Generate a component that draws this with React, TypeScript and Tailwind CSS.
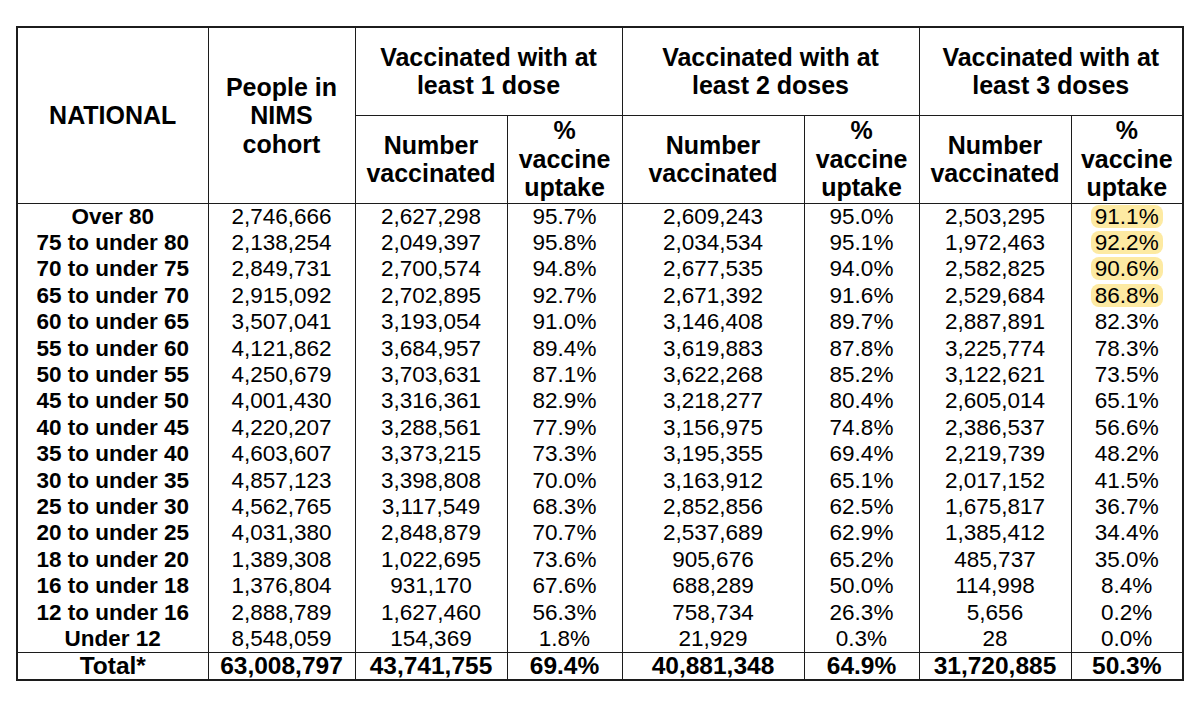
import React from 'react';

type Row = [string, string, string, string, string, string, string, string];

const ROWS: Row[] = [
  ['Over 80', '2,746,666', '2,627,298', '95.7%', '2,609,243', '95.0%', '2,503,295', '91.1%'],
  ['75 to under 80', '2,138,254', '2,049,397', '95.8%', '2,034,534', '95.1%', '1,972,463', '92.2%'],
  ['70 to under 75', '2,849,731', '2,700,574', '94.8%', '2,677,535', '94.0%', '2,582,825', '90.6%'],
  ['65 to under 70', '2,915,092', '2,702,895', '92.7%', '2,671,392', '91.6%', '2,529,684', '86.8%'],
  ['60 to under 65', '3,507,041', '3,193,054', '91.0%', '3,146,408', '89.7%', '2,887,891', '82.3%'],
  ['55 to under 60', '4,121,862', '3,684,957', '89.4%', '3,619,883', '87.8%', '3,225,774', '78.3%'],
  ['50 to under 55', '4,250,679', '3,703,631', '87.1%', '3,622,268', '85.2%', '3,122,621', '73.5%'],
  ['45 to under 50', '4,001,430', '3,316,361', '82.9%', '3,218,277', '80.4%', '2,605,014', '65.1%'],
  ['40 to under 45', '4,220,207', '3,288,561', '77.9%', '3,156,975', '74.8%', '2,386,537', '56.6%'],
  ['35 to under 40', '4,603,607', '3,373,215', '73.3%', '3,195,355', '69.4%', '2,219,739', '48.2%'],
  ['30 to under 35', '4,857,123', '3,398,808', '70.0%', '3,163,912', '65.1%', '2,017,152', '41.5%'],
  ['25 to under 30', '4,562,765', '3,117,549', '68.3%', '2,852,856', '62.5%', '1,675,817', '36.7%'],
  ['20 to under 25', '4,031,380', '2,848,879', '70.7%', '2,537,689', '62.9%', '1,385,412', '34.4%'],
  ['18 to under 20', '1,389,308', '1,022,695', '73.6%', '905,676', '65.2%', '485,737', '35.0%'],
  ['16 to under 18', '1,376,804', '931,170', '67.6%', '688,289', '50.0%', '114,998', '8.4%'],
  ['12 to under 16', '2,888,789', '1,627,460', '56.3%', '758,734', '26.3%', '5,656', '0.2%'],
  ['Under 12', '8,548,059', '154,369', '1.8%', '21,929', '0.3%', '28', '0.0%'],
];

const TOTAL: Row = ['Total*', '63,008,797', '43,741,755', '69.4%', '40,881,348', '64.9%', '31,720,885', '50.3%'];

// rows whose 3-dose uptake is marked with a highlighter
const HIGHLIGHT = 4;

const cellLine = 'border-x border-[#1c1c1c]';

export default function App() {
  return (
    <div className="w-[1200px] h-[703px] bg-white pt-[26px] pl-[16px] font-['Liberation_Sans',Arial,sans-serif] text-black">
      <table className="table-fixed border-collapse border-2 border-[#1c1c1c] w-[1166px]">
        <colgroup>
          <col className="w-[191px]" />
          <col className="w-[147px]" />
          <col className="w-[152px]" />
          <col className="w-[115px]" />
          <col className="w-[182px]" />
          <col className="w-[115px]" />
          <col className="w-[152px]" />
          <col className="w-[112px]" />
        </colgroup>
        <thead className="text-[25px] font-bold leading-[28.5px]">
          <tr className="h-[88px]">
            <th rowSpan={2} className={`${cellLine} border-b p-0 align-middle`}>
              NATIONAL
            </th>
            <th rowSpan={2} className={`${cellLine} border-b p-0 align-middle`}>
              People in
              <br />
              NIMS
              <br />
              cohort
            </th>
            {['1 dose', '2 doses', '3 doses'].map((d) => (
              <th key={d} colSpan={2} className={`${cellLine} border-b p-0 align-middle`}>
                Vaccinated with at
                <br />
                least {d}
              </th>
            ))}
          </tr>
          <tr className="h-[88px]">
            {[0, 1, 2].map((i) => (
              <React.Fragment key={i}>
                <th className={`${cellLine} border-b p-0 align-middle`}>
                  Number
                  <br />
                  vaccinated
                </th>
                <th className={`${cellLine} border-b p-0 align-middle`}>
                  %
                  <br />
                  vaccine
                  <br />
                  uptake
                </th>
              </React.Fragment>
            ))}
          </tr>
        </thead>
        <tbody className="text-[22.5px] leading-[26.4px]">
          {ROWS.map((row, r) => (
            <tr key={row[0]} className="h-[26.4px]">
              {row.map((v, c) => (
                <td key={c} className={`${cellLine} p-0 text-center whitespace-nowrap ${c === 0 ? 'font-bold' : ''}`}>
                  {c === 7 && r < HIGHLIGHT ? (
                    <span className="inline-block rounded-[8px] bg-[#fdeaa2] px-[4px] leading-[23px]">{v}</span>
                  ) : (
                    v
                  )}
                </td>
              ))}
            </tr>
          ))}
          <tr className="h-[27px] border-t border-[#1c1c1c]">
            {TOTAL.map((v, c) => (
              <td key={c} className={`${cellLine} p-0 text-center whitespace-nowrap font-bold text-[24.5px] leading-[26px]`}>
                {v}
              </td>
            ))}
          </tr>
        </tbody>
      </table>
    </div>
  );
}
